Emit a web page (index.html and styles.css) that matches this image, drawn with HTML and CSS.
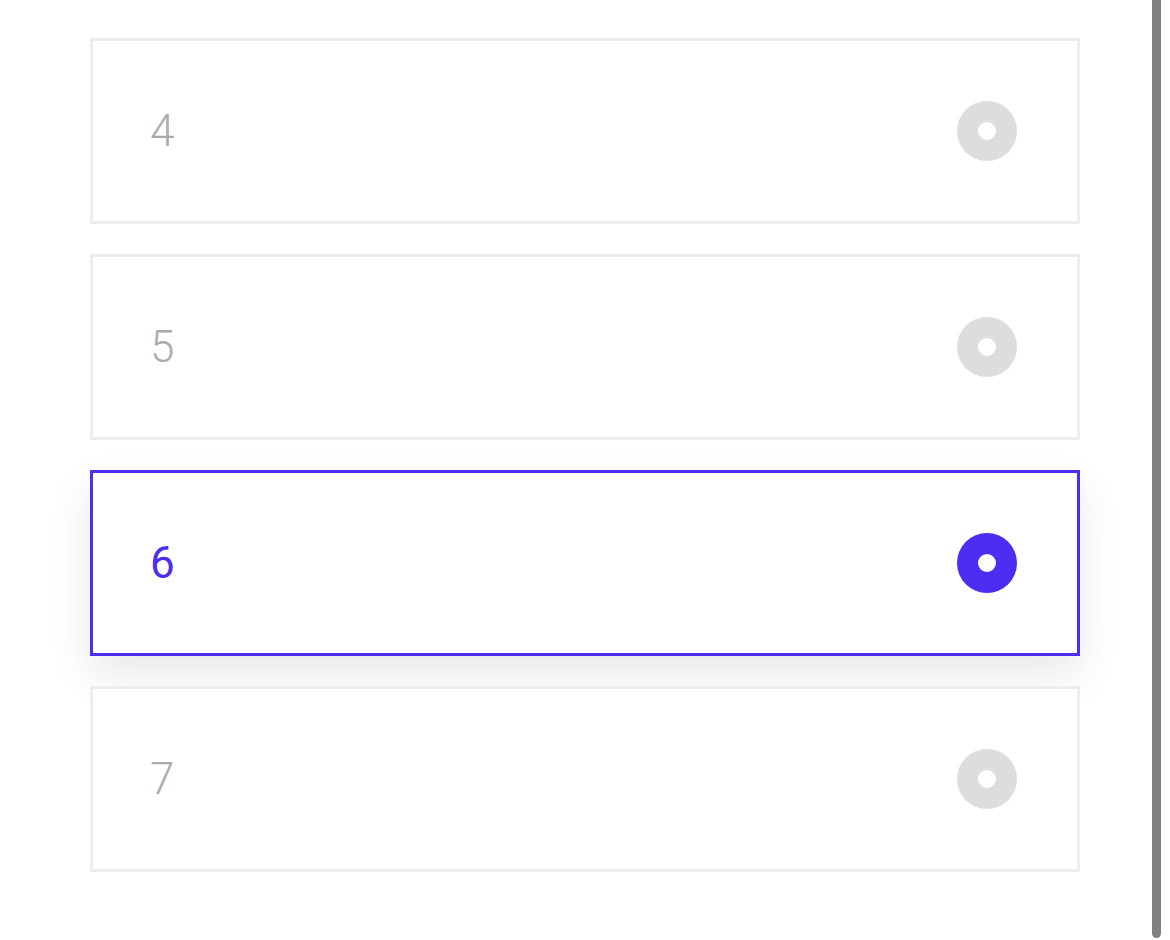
FILE: index.html
```html
<!DOCTYPE html>
<html lang="en">
  <head>
    <meta charset="UTF-8" />
    <meta name="viewport" content="width=device-width, initial-scale=1.0" />
    <title>Choose a number</title>
    <link rel="stylesheet" href="styles.css">
  </head>
  <body>
    <div class="valg">
      <label class="kort">
        <span class="tal">4</span>
        <span class="radio"></span>
      </label>
      <label class="kort">
        <span class="tal">5</span>
        <span class="radio"></span>
      </label>
      <label class="kort valgt">
        <span class="tal">6</span>
        <span class="radio"></span>
      </label>
      <label class="kort">
        <span class="tal">7</span>
        <span class="radio"></span>
      </label>
    </div>
    <div class="scrollbar"></div>
  </body>
</html>
```

FILE: styles.css
```css
* {
  margin: 0;
  box-sizing: border-box;
}

body {
  margin: 0;
  padding: 0;
  background: #fff;
  font-family: Roboto, "Liberation Sans", sans-serif;
  height: 940px;
  overflow: hidden;
}

.valg {
  display: flex;
  flex-direction: column;
  gap: 30px;
  width: 990px;
  margin-left: 90px;
  padding-top: 38px;
}

.kort {
  display: flex;
  align-items: center;
  justify-content: space-between;
  height: 186px;
  padding: 0 60px 0 57px;
  border: 3px solid #ededed;
  background: #fff;
}

.tal {
  font-size: 44px;
  font-weight: 300;
  color: #ababab;
  line-height: 1;
  letter-spacing: -1px;
}

.radio {
  width: 60px;
  height: 60px;
  border-radius: 50%;
  background: #dddddd;
  display: flex;
  align-items: center;
  justify-content: center;
}

.radio::after {
  content: "";
  width: 18px;
  height: 18px;
  border-radius: 50%;
  background: #fff;
}

.valgt {
  border-color: #4b2ef2;
  box-shadow: 0 18px 40px rgba(0, 0, 0, 0.09);
}

.valgt .tal {
  color: #4b2ef2;
  font-weight: 400;
}

.valgt .radio {
  background: #4b2ef2;
}

.scrollbar {
  position: fixed;
  left: 1152px;
  top: -10px;
  width: 9px;
  height: 948px;
  border-radius: 5px;
  background: #808080;
}
```
